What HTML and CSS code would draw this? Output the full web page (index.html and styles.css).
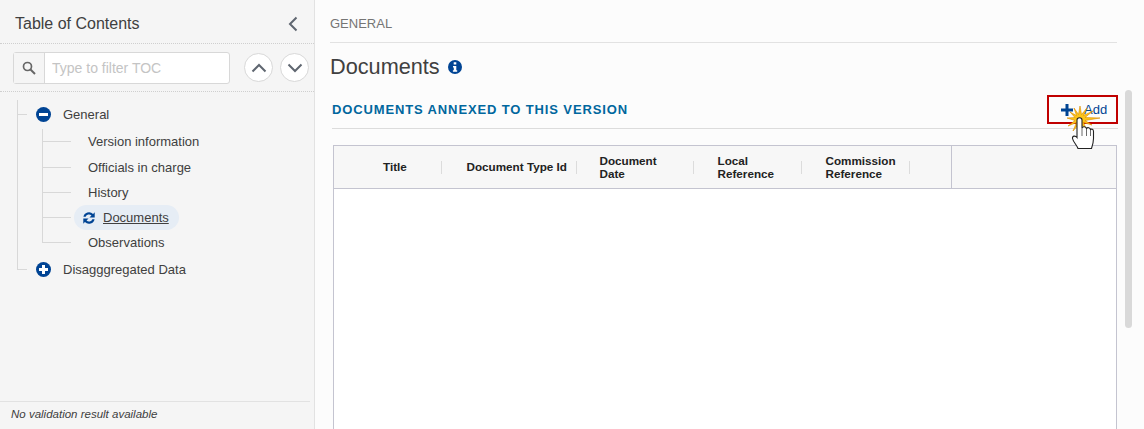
FILE: index.html
```html
<!DOCTYPE html>
<html lang="en">

<head>
    <meta charset="UTF-8">
    <meta name="viewport" content="width=device-width, initial-scale=1.0">
    <title>Documents</title>
    <link rel="stylesheet" href="styles.css">
</head>

<body>
    <aside class="sidebar">
        <div class="toc-header">
            <span class="toc-title">Table of Contents</span>
            <svg class="collapse-icon" width="12" height="16" viewBox="0 0 12 16"><path d="M9.500 1.500 3 8l6.500 6.500" fill="none" stroke="#5f6670" stroke-width="2"/></svg>
        </div>
        <div class="toc-filter">
            <div class="filter-box">
                <span class="filter-icon">
                    <svg width="14" height="14" viewBox="0 0 14 14"><circle cx="5.500" cy="5.500" r="4" fill="none" stroke="#666" stroke-width="1.700"/><path d="M8.500 8.500 13 13" stroke="#666" stroke-width="2"/></svg>
                </span>
                <input type="text" class="filter-input" placeholder="Type to filter TOC">
            </div>
            <button class="round-btn"><svg width="16" height="10" viewBox="0 0 16 10"><path d="M1.500 8.500 8 2l6.500 6.500" fill="none" stroke="#5f6670" stroke-width="2"/></svg></button>
            <button class="round-btn"><svg width="16" height="10" viewBox="0 0 16 10"><path d="M1.500 1.500 8 8l6.500-6.500" fill="none" stroke="#5f6670" stroke-width="2"/></svg></button>
        </div>
        <ul class="tree">
            <li class="tree-node">
                <div class="node-row">
                    <svg class="node-icon" width="15" height="15" viewBox="0 0 15 15"><circle cx="7.500" cy="7.500" r="7.500" fill="#004494"/><rect x="3" y="6" width="9" height="3" fill="#fff"/></svg>
                    <span>General</span>
                </div>
                <ul class="subtree">
                    <li class="leaf leaf-first">Version information</li>
                    <li class="leaf">Officials in charge</li>
                    <li class="leaf">History</li>
                    <li class="leaf leaf-active">
                        <span class="active-pill">
                            <svg width="14" height="14" viewBox="0 0 13 13"><path d="M1.300 5.400A5.300 5.300 0 0 1 10.300 2.700l1.500-1.500v4.900H6.900L8.800 4.200A3.200 3.200 0 0 0 3.400 5.400zM11.700 7.600A5.300 5.300 0 0 1 2.700 10.300l-1.500 1.500V6.900h4.900L4.200 8.800a3.200 3.200 0 0 0 5.400-1.200z" fill="#004494"/></svg>
                            <a href="#">Documents</a>
                        </span>
                    </li>
                    <li class="leaf">Observations</li>
                </ul>
            </li>
            <li class="tree-node">
                <div class="node-row">
                    <svg class="node-icon" width="15" height="15" viewBox="0 0 15 15"><circle cx="7.500" cy="7.500" r="7.500" fill="#004494"/><path d="M3 6h3V3h3v3h3v3H9v3H6V9H3z" fill="#fff"/></svg>
                    <span>Disagggregated Data</span>
                </div>
            </li>
        </ul>
        <div class="validation">No validation result available</div>
    </aside>

    <main class="content">
        <div class="breadcrumb">GENERAL</div>
        <h1 class="page-title">
            Documents
            <svg width="14" height="14" viewBox="0 0 14 14"><circle cx="7" cy="7" r="7" fill="#004494"/><path d="M5.700 2.300h2.600v2.200H5.700zM5 6h3.300v4.200h.9v1.500H4.900v-1.500h.9V7.500H5z" fill="#fff"/></svg>
        </h1>
        <div class="section-header">
            <h2>DOCUMENTS ANNEXED TO THIS VERSION</h2>
            <button class="add-btn">
                <svg width="12" height="12" viewBox="0 0 12 12"><path d="M4.500 0h3v4.500H12v3H7.500V12h-3V7.500H0v-3h4.500z" fill="#004494"/></svg>
                <span>Add</span>
            </button>
        </div>
        <table class="documents-table">
            <thead>
                <tr>
                    <th class="col-title"><span>Title</span></th>
                    <th class="col-type"><span>Document Type Id</span></th>
                    <th class="col-date"><span>Document<br>Date</span></th>
                    <th class="col-local"><span>Local<br>Reference</span></th>
                    <th class="col-commission"><span>Commission<br>Reference</span></th>
                    <th class="col-spacer"></th>
                    <th class="col-actions"></th>
                </tr>
            </thead>
            <tbody>
                <tr class="empty-row">
                    <td colspan="7"></td>
                </tr>
            </tbody>
        </table>
        <div class="scrollbar"></div>
        <svg class="cursor" width="38" height="46" viewBox="0 0 38 46">
            <path d="M35 13 20 15.500 27 20 18.500 17.500 22 26 16 19 15 28 14 19 8 26 11.500 17.500 3 21 10 15.500 2 13 10 12.500 5 7 11.500 10.500 9 3 13.500 9.500 15 1 16.500 9.500 22 3 18.500 10.500 28 6 20 12.500z" fill="#fcc419" stroke="#d98a00" stroke-width=".6"/>
            <path d="M12 15c0-3 5-3 5 0v8c1-2 4-1.500 4.500.5c1-1.500 3.500-1 4 1c1-.8 3-.3 3 2v7c0 4-1 7-2 10H13c-1-3-5-7-5.500-10c-.3-3 3-3 4.500-1z" fill="#fff" stroke="#222" stroke-width="1.100"/>
            <path d="M17 23v8M21.500 24v7M25.500 25v6" stroke="#444" stroke-width=".8"/>
        </svg>
    </main>
</body>

</html>
```

FILE: styles.css
```css
* {
    box-sizing: border-box;
}

html,
body {
    height: 100%;
}

body {
    margin: 0;
    display: flex;
    overflow: hidden;
    font-family: "Liberation Sans", Arial, sans-serif;
    color: #404040;
    background-color: #fcfcfc;
}

.sidebar {
    width: 315px;
    flex-shrink: 0;
    display: flex;
    flex-direction: column;
    background-color: #f5f5f5;
    border-right: 1px solid #e2e2e2;
}

.toc-header {
    height: 44px;
    display: flex;
    justify-content: space-between;
    align-items: center;
    padding: 5px 15px 0;
    border-bottom: 1px dotted #cfcfcf;
}

.toc-title {
    font-size: 16px;
}

.toc-filter {
    height: 48px;
    display: flex;
    align-items: center;
    gap: 7px;
    padding-left: 13px;
    border-bottom: 1px dotted #cfcfcf;
}

.filter-box {
    width: 217px;
    height: 32px;
    display: flex;
    margin-right: 7px;
    background-color: #fff;
    border: 1px solid #d8d8d8;
    border-radius: 3px;
}

.filter-icon {
    width: 31px;
    display: flex;
    align-items: center;
    justify-content: center;
    background-color: #f5f5f5;
    border-right: 1px solid #d8d8d8;
}

.filter-input {
    flex: 1;
    min-width: 0;
    border: none;
    background: none;
    padding: 0 7px;
    font-family: inherit;
    font-size: 14px;
}

.filter-input::placeholder {
    color: #c4c4c4;
}

.round-btn {
    width: 29px;
    height: 29px;
    flex-shrink: 0;
    padding: 0;
    display: flex;
    align-items: center;
    justify-content: center;
    background-color: #fff;
    border: 1px solid #d8d8d8;
    border-radius: 50%;
}

.tree,
.subtree {
    list-style: none;
    margin: 0;
    padding: 0;
}

.tree {
    flex: 1;
    position: relative;
    padding-top: 10px;
    font-size: 13px;
}

/* guide line of the first level */
.tree::before {
    content: "";
    position: absolute;
    left: 17px;
    top: 8px;
    height: 169px;
    border-left: 1px solid #d8d8d8;
}

.node-row {
    height: 25px;
    display: flex;
    align-items: center;
    gap: 12px;
    padding-left: 36px;
    position: relative;
}

.node-row::before {
    content: "";
    position: absolute;
    left: 17px;
    top: 12px;
    width: 10px;
    border-top: 1px solid #d8d8d8;
}

.subtree {
    position: relative;
    padding-bottom: 2px;
}

.subtree::before {
    content: "";
    position: absolute;
    left: 42px;
    top: 0;
    bottom: 14px;
    border-left: 1px solid #d8d8d8;
}

.leaf {
    height: 25px;
    display: flex;
    align-items: center;
    padding-left: 88px;
    position: relative;
}

.leaf-first {
    height: 26px;
    margin-top: 2px;
    padding-bottom: 2px;
}

.leaf::before {
    content: "";
    position: absolute;
    left: 42px;
    top: 12px;
    width: 29px;
    border-top: 1px solid #d8d8d8;
}

.leaf-active {
    padding-left: 74px;
}

.active-pill {
    height: 25px;
    display: flex;
    align-items: center;
    gap: 7px;
    padding: 0 10px 0 8px;
    background-color: #e6edf5;
    border-radius: 13px;
}

.active-pill a {
    color: #404040;
}

.validation {
    height: 28px;
    margin-right: 4px;
    padding: 6px 11px 0;
    font-size: 11.500px;
    font-style: italic;
    border-top: 1px solid #e2e2e2;
}

.content {
    flex: 1;
    min-width: 0;
    position: relative;
    padding: 0 27px 0 15px;
}

.breadcrumb {
    height: 43px;
    padding-top: 16px;
    font-size: 13px;
    color: #757575;
    border-bottom: 1px solid #e2e2e2;
}

.page-title {
    display: flex;
    align-items: center;
    gap: 8px;
    margin: 11px 0 0;
    height: 26px;
    font-size: 21.700px;
    font-weight: 400;
}

.section-header {
    display: flex;
    justify-content: space-between;
    align-items: center;
    height: 34px;
    margin: 15px -1px 16px 2px;
    border-bottom: 1px solid #dcdcdc;
}

.section-header h2 {
    margin: 0 0 4px;
    font-size: 13px;
    letter-spacing: .87px;
    color: #00679e;
}

.add-btn {
    width: 71px;
    height: 29px;
    display: flex;
    align-items: center;
    gap: 11px;
    padding: 0 0 0 12px;
    margin-bottom: 4px;
    font-family: inherit;
    font-size: 13px;
    color: #004494;
    background: none;
    border: 2px solid #c00000;
}

.documents-table {
    width: 784px;
    margin-left: 3px;
    border-collapse: collapse;
    table-layout: fixed;
    border: 1px solid #c4c4d0;
    border-bottom: none;
    background-color: #fff;
}

.documents-table thead {
    background-color: #f7f7f7;
}

.documents-table th {
    height: 43px;
    padding: 0;
    font-size: 11.700px;
    line-height: 13px;
    text-align: left;
    color: #222;
    border-bottom: 1px solid #c4c4d0;
}

.documents-table th span {
    display: flex;
    align-items: center;
    height: 13px;
    padding-left: 24px;
    overflow: visible;
    white-space: nowrap;
    border-right: 1px solid #dcdcdc;
}

.col-title {
    width: 108px;
}

.documents-table .col-title span {
    padding: 0 0 2px 49px;
}

.col-type {
    width: 135px;
}

.documents-table .col-type span {
    padding: 0 0 2px 25px;
}

.col-date {
    width: 117px;
}

.documents-table .col-date span {
    padding-left: 23px;
}

.col-local,
.col-commission {
    width: 108px;
}

.col-spacer {
    width: 42px;
    border-right: 1px solid #c4c4d0;
}

.empty-row td {
    height: 240px;
    padding: 0;
}

.scrollbar {
    position: absolute;
    left: 810px;
    top: 90px;
    width: 7px;
    height: 238px;
    background-color: #d9d9d9;
    border-radius: 4px;
}

.cursor {
    position: absolute;
    left: 750px;
    top: 105px;
}
```
